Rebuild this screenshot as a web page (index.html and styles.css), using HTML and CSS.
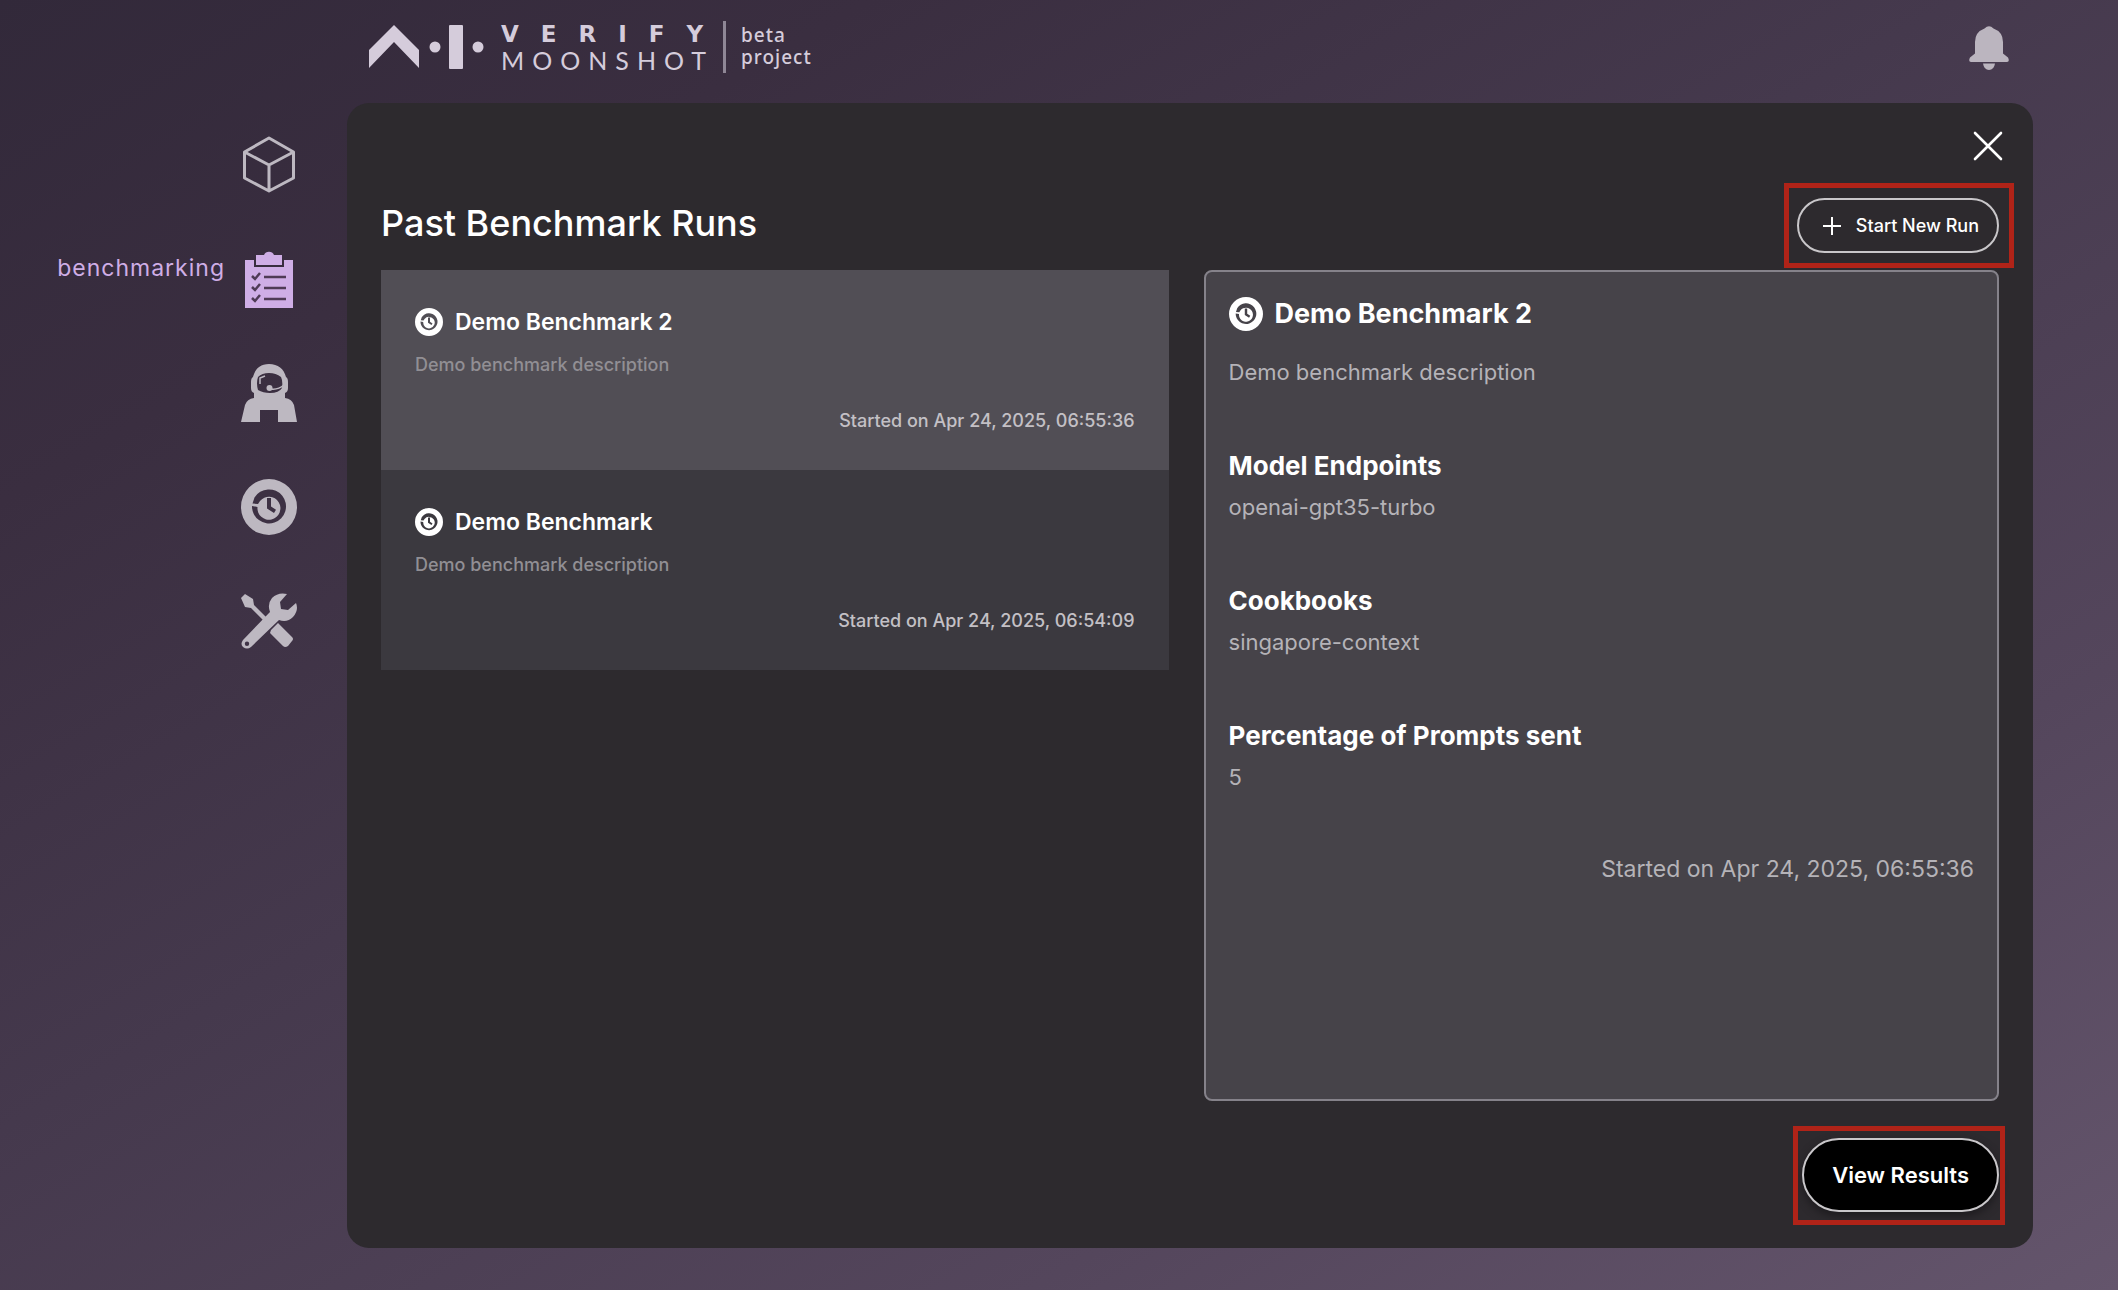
FILE: index.html
```html
<!DOCTYPE html>
<html lang="en">
<head>
<meta charset="utf-8">
<title>AI Verify Moonshot - Past Benchmark Runs</title>
<meta name="viewport" content="width=device-width, initial-scale=1">
<link rel="stylesheet" href="styles.css">
</head>
<body>
<svg class="sprite" aria-hidden="true">
  <symbol id="history" viewBox="0 0 56 56">
    <path fill-rule="evenodd" fill="currentColor" d="M28 0a28 28 0 1 1 0 56a28 28 0 1 1 0-56zM13.500 18.500L11.500 24.500L17 25L19 22A11.500 11.500 0 1 1 16.500 28L11 27A17 17 0 1 0 13.500 18.500zM26 19v10.500l7 4.500l2-3.200l-5-3.300v-8.500z"/>
  </symbol>
</svg>
<div class="app">
  <header class="topbar">
    <a class="logo" href="#" aria-label="AI Verify Moonshot">
      <svg class="logo-mark" width="116" height="44" viewBox="0 0 116 44" fill="currentColor" aria-hidden="true">
        <path d="M0 25L25 0l25 25v18L25 17L0 43z"/>
        <circle cx="66" cy="22" r="5.500"/>
        <rect x="80" width="14" height="44" rx="1"/>
        <circle cx="109" cy="22" r="5.500"/>
      </svg>
      <span class="logo-name"><span class="logo-verify">VERIFY</span><span class="logo-moonshot">MOONSHOT</span></span>
      <span class="logo-tag">beta<br>project</span>
    </a>
    <button class="icon-button bell" aria-label="Notifications">
      <svg width="40" height="44" viewBox="0 0 40 44" fill="currentColor"><path d="M15.500 2.500Q20-2 24.500 2.500Q34 6 34 16v11.500l5 4q2 4-1 4.500H2q-3-.5-1-4.500l5-4V16Q6 6 15.500 2.500zM14 37.500h12q-1 6.500-6 6.500t-6-6.500z"/></svg>
    </button>
  </header>
  <nav class="sidebar" aria-label="Main">
    <a class="nav-item" href="#" aria-label="home">
      <svg width="56" height="58" viewBox="0 0 56 58" fill="none" stroke="currentColor" stroke-width="3" stroke-linejoin="round"><path d="M28 2L52.500 16v26L28 55L3.500 42V16zM3.500 16L28 29l24.500-13M28 29v26"/></svg>
    </a>
    <a class="nav-item nav-item-active" href="#">
      <span class="nav-label">benchmarking</span>
      <svg width="56" height="58" viewBox="0 0 56 58" fill="currentColor"><path d="M4 10h9v7h30v-7h9v48H4z"/><path d="M15 5h8a5.500 5.500 0 0 1 10 0h8v10H15z"/><path d="M11 26l3 3l5-6M11 37l3 3l5-6M11 48l3 3l5-6M23 27h22M23 38h22M23 49h22" fill="none" stroke="#4f3b56" stroke-width="2.500"/></svg>
    </a>
    <a class="nav-item" href="#" aria-label="red teaming">
      <svg width="56" height="58" viewBox="0 0 56 58" fill="currentColor"><path fill-rule="evenodd" d="M28 0C37 0 43 5 45 13q2 1 2 5v6q0 4-3 5v5q7 1 9 7l3 17H37V46H19v12H0l4-17q2-6 9-7v-5q-3-1-3-5v-6q0-4 2-5C14 5 19 0 28 0zM17 13q-2 6 0 13q5 3 12 3q9 0 12-5q1-7-1-11q-5-4-12-4t-11 4z"/><path d="M43 21q-6 5-13 4M19 20v-6l5-2" fill="none" stroke="currentColor" stroke-width="1.500"/><circle cx="28.500" cy="24" r="3"/></svg>
    </a>
    <a class="nav-item" href="#" aria-label="history">
      <svg width="56" height="58" viewBox="0 0 56 56"><use href="#history"/></svg>
    </a>
    <a class="nav-item" href="#" aria-label="utilities">
      <svg width="56" height="58" viewBox="0 0 56 58" fill="currentColor"><path d="M0 6l4-4l8 5l1 6l17 17l-3 3L10 16l-6-1z"/><path fill-rule="evenodd" d="M46 2q-9-2-15 4q-5 6-2 14L2 48q-3 4 0 7q4 3 8 0l28-27q8 3 14-3q6-7 3-14l-8 7l-7-1l-1-7zM6 49.500a2.200 2.200 0 1 1 0 4.400a2.200 2.200 0 1 1 0-4.400z"/><path d="M30 38l7-7l14 14q2 2 0 4l-4 5q-3 2-5 0L29 41z"/></svg>
    </a>
  </nav>
  <main class="panel">
    <button class="icon-button close" aria-label="Close">
      <svg width="30" height="30" viewBox="0 0 30 30" fill="none" stroke="currentColor" stroke-width="2.600" stroke-linecap="round"><path d="M2 2l26 26M28 2L2 28"/></svg>
    </button>
    <div class="panel-head">
      <h1>Past Benchmark Runs</h1>
      <div class="marked marked-start">
        <button class="pill pill-outline"><svg width="20" height="20" viewBox="0 0 20 20" fill="none" stroke="currentColor" stroke-width="2" aria-hidden="true"><path d="M10 1v18M1 10h18"/></svg>Start New Run</button>
      </div>
    </div>
    <div class="columns">
      <ul class="runs">
        <li><button class="run run-selected">
          <span class="run-title"><svg width="28" height="28" aria-hidden="true"><use href="#history"/></svg>Demo Benchmark 2</span>
          <span class="run-desc">Demo benchmark description</span>
          <span class="run-date">Started on Apr 24, 2025, 06:55:36</span>
        </button></li>
        <li><button class="run">
          <span class="run-title"><svg width="28" height="28" aria-hidden="true"><use href="#history"/></svg>Demo Benchmark</span>
          <span class="run-desc">Demo benchmark description</span>
          <span class="run-date">Started on Apr 24, 2025, 06:54:09</span>
        </button></li>
      </ul>
      <article class="detail">
        <header>
          <h2><svg width="34" height="34" aria-hidden="true"><use href="#history"/></svg>Demo Benchmark 2</h2>
          <p class="detail-desc">Demo benchmark description</p>
        </header>
        <section><h3>Model Endpoints</h3><p>openai-gpt35-turbo</p></section>
        <section><h3>Cookbooks</h3><p>singapore-context</p></section>
        <section><h3>Percentage of Prompts sent</h3><p>5</p></section>
        <p class="detail-date">Started on Apr 24, 2025, 06:55:36</p>
      </article>
    </div>
    <div class="panel-foot">
      <div class="marked marked-results"><button class="pill pill-solid">View Results</button></div>
    </div>
  </main>
</div>
</body>
</html>
```
FILE: styles.css
```css
* { box-sizing: border-box; }
body {
  margin: 0;
  font-family: Inter, "Liberation Sans", sans-serif;
  color: #fff;
  background: linear-gradient(150deg, #32293a 0%, #3a2e40 20%, #45394d 45%, #54465c 75%, #64556c 100%) fixed;
}
h1, h2, h3, p, ul { margin: 0; padding: 0; }
ul { list-style: none; }
a { color: inherit; text-decoration: none; }
button { font: inherit; color: inherit; border: 0; background: none; padding: 0; cursor: pointer; }
svg { display: block; flex: none; }
.sprite { position: absolute; width: 0; height: 0; }

.app {
  display: grid;
  grid-template-columns: 347px 1fr;
  grid-template-rows: 103px 1fr;
  min-height: 100vh;
  padding: 0 85px 42px 0;
}

.topbar {
  grid-column: 2;
  display: flex;
  justify-content: space-between;
  align-items: flex-start;
  padding: 21px 24px 0 22px;
}
.logo { display: flex; align-items: center; color: #d5ccdb; }
.logo-name { display: flex; flex-direction: column; margin-left: 16px; width: 222px; }
.logo-verify {
  font: bold 23px/26px "DejaVu Sans", sans-serif;
  letter-spacing: 22px;
  white-space: nowrap;
}
.logo-moonshot {
  font: 400 25px/26px Lato, sans-serif;
  letter-spacing: 8px;
  white-space: nowrap;
}
.logo-tag {
  border-left: 3px solid #8f8796;
  padding: 3px 0 5px 15px;
  font: 500 19px/22px "Noto Sans", sans-serif;
  letter-spacing: 1px;
}
.icon-button { display: block; color: #bbb5bf; }
.bell { margin-top: 5px; }

.sidebar {
  display: flex;
  flex-direction: column;
  gap: 56px;
  padding: 33px 50px 0 0;
  color: #bdb8c1;
}
.nav-item { display: flex; justify-content: flex-end; align-items: center; gap: 16px; height: 58px; }
.nav-item-active { color: #cfaee6; }
.nav-label { font-size: 23px; line-height: 28px; letter-spacing: 1px; padding-bottom: 22px; }

.panel {
  display: flex;
  flex-direction: column;
  padding: 28px 30px 36px;
  border-radius: 22px;
  background: #2d2a2e;
}
.close { align-self: flex-end; color: #fff; }
.panel-head {
  display: flex;
  justify-content: space-between;
  align-items: flex-start;
  margin: 37px 4px 17px;
}
h1 { font-size: 36px; line-height: 50px; font-weight: 500; }

.marked { position: relative; }
.marked::after { content: ""; position: absolute; border: 5px solid #b02318; pointer-events: none; }
.marked-start::after { inset: -15px -15px -15px -13px; }
.marked-results::after { inset: -12px -6px -13px -9px; }
.pill {
  display: flex;
  align-items: center;
  border: 2px solid #c9c7ca;
  border-radius: 40px;
  font-weight: 500;
  white-space: nowrap;
}
.pill-outline { gap: 14px; height: 55px; padding: 0 18px 0 23px; font-size: 18px; }
.pill-solid { height: 74px; padding: 0 28px; background: #000; font-size: 22px; font-weight: 600; box-shadow: 0 4px 8px #1d1b1e; }

.columns {
  flex: 1;
  display: grid;
  grid-template-columns: 99fr 100fr;
  gap: 35px;
  padding: 0 4px;
}
.run {
  display: flex;
  flex-direction: column;
  width: 100%;
  padding: 36px 34px 35px;
  background: #3b393f;
  text-align: left;
}
.run-selected { background: #514e55; }
.run-title {
  display: flex;
  align-items: center;
  gap: 12px;
  font-size: 23px;
  line-height: 32px;
  font-weight: 600;
}
.run-desc,
.run-date { font-size: 18px; line-height: 28px; font-weight: 500; }
.run-desc { margin: 13px 0 28px; color: #918f94; }
.run-date { align-self: flex-end; color: #c3c0c5; }

.detail {
  display: flex;
  flex-direction: column;
  gap: 60px;
  padding: 24px 23px;
  border: 2px solid #85828a;
  border-radius: 8px;
  background: #464349;
  font-size: 22px;
  line-height: 32px;
  color: #b5b3b8;
}
.detail h2, .detail h3 { font-size: 26px; line-height: 36px; font-weight: 700; color: #fff; }
.detail h2 { display: flex; align-items: center; gap: 12px; font-size: 27px; }
.detail-desc { margin-top: 24px; }
.detail section p { margin-top: 7px; }
.detail-date { align-self: flex-end; font-size: 23px; }

.panel-foot { display: flex; justify-content: flex-end; margin: 37px 4px 0; }
```
